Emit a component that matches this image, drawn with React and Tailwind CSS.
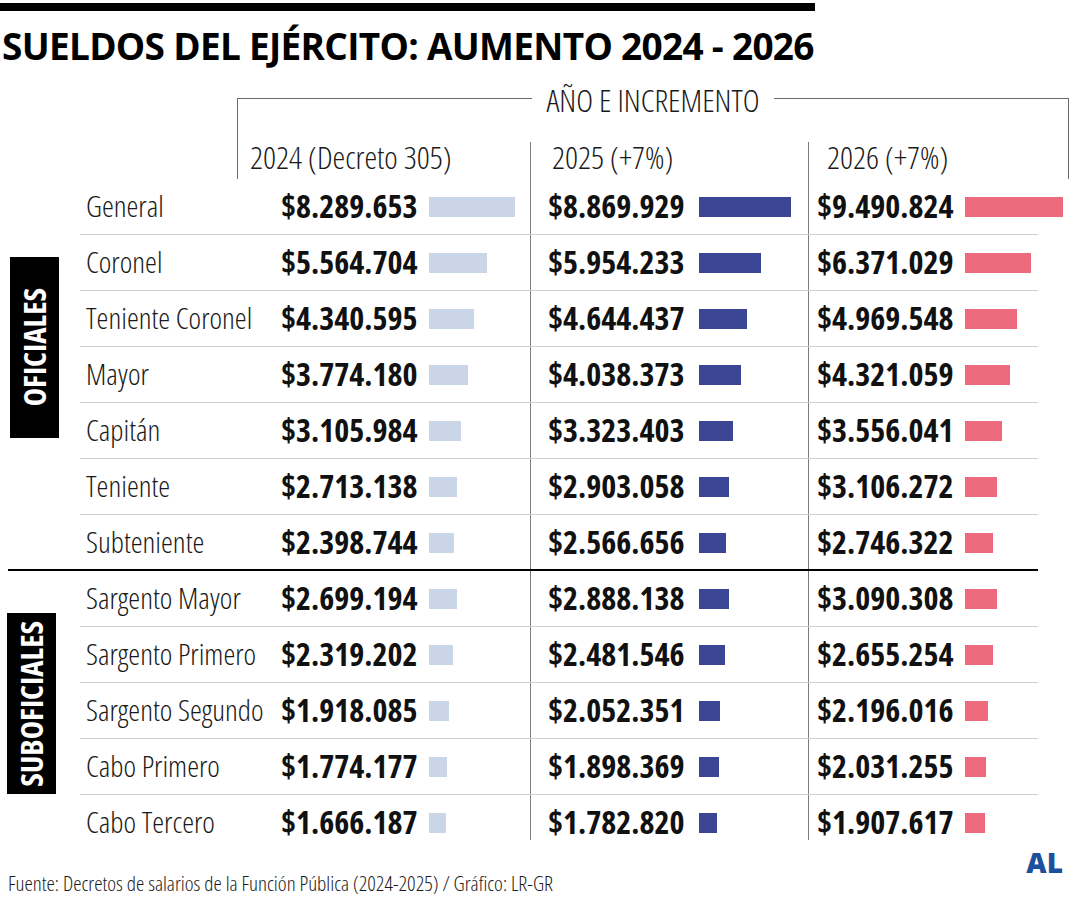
import React from 'react';

// Open Sans is variable on width, so 75% gives the condensed cut of the chart
const COND = "[font-family:'Open_Sans',sans-serif] [font-stretch:75%]";

const OFICIALES = [
  { rank: 'General', v: ['8.289.653', '8.869.929', '9.490.824'] },
  { rank: 'Coronel', v: ['5.564.704', '5.954.233', '6.371.029'] },
  { rank: 'Teniente Coronel', v: ['4.340.595', '4.644.437', '4.969.548'] },
  { rank: 'Mayor', v: ['3.774.180', '4.038.373', '4.321.059'] },
  { rank: 'Capitán', v: ['3.105.984', '3.323.403', '3.556.041'] },
  { rank: 'Teniente', v: ['2.713.138', '2.903.058', '3.106.272'] },
  { rank: 'Subteniente', v: ['2.398.744', '2.566.656', '2.746.322'] },
];

const SUBOFICIALES = [
  { rank: 'Sargento Mayor', v: ['2.699.194', '2.888.138', '3.090.308'] },
  { rank: 'Sargento Primero', v: ['2.319.202', '2.481.546', '2.655.254'] },
  { rank: 'Sargento Segundo', v: ['1.918.085', '2.052.351', '2.196.016'] },
  { rank: 'Cabo Primero', v: ['1.774.177', '1.898.369', '2.031.255'] },
  { rank: 'Cabo Tercero', v: ['1.666.187', '1.782.820', '1.907.617'] },
];

// px per peso, General 2024 = 86px
const SCALE = 86 / 8289653;

function barWidth(str) {
  return Math.round(Number(str.replace(/\./g, '')) * SCALE);
}

function Cell({ value, color, valueW, className }) {
  return (
    <div className={`pt-[10px] ${className}`}>
      <div className="flex h-[34px] items-center">
        <span className={`${valueW} shrink-0 text-[32px] leading-[34px] font-bold text-[#111]`}>
          ${value}
        </span>
        <div className={`mt-[2px] h-[20px] shrink-0 ${color}`} style={{ width: barWidth(value) }} />
      </div>
    </div>
  );
}

function Row({ item, border, height }) {
  return (
    <div className={`flex ${height} ${border ? 'border-b border-[#cfcfcf]' : ''}`}>
      <div className="w-[201px] shrink-0 pl-[6px] pt-[10px]">
        <div className="h-[34px] flex items-center text-[30px] leading-[34px] font-light text-[#1a1a1a] whitespace-nowrap">
          {item.rank}
        </div>
      </div>
      <Cell value={item.v[0]} color="bg-[#cad5e8]" valueW="w-[148px]" className="w-[249px] shrink-0" />
      <Cell value={item.v[1]} color="bg-[#3b4695]" valueW="w-[151px]" className="w-[278px] shrink-0 border-l border-[#7a7a7a] pl-[17px]" />
      <Cell value={item.v[2]} color="bg-[#ec6a7c]" valueW="w-[148px]" className="w-[230px] shrink-0 border-l border-[#7a7a7a] pl-[8px]" />
    </div>
  );
}

function Group({ label, items, boxClass, lastHeight }) {
  return (
    <div className="flex">
      <div className="w-[80px] shrink-0">
        <div className={`w-[49px] bg-black flex items-center justify-center ${boxClass}`}>
          <span className="[writing-mode:vertical-rl] rotate-180 text-white font-bold text-[31px] leading-none">
            {label}
          </span>
        </div>
      </div>
      <div className="w-[958px]">
        {items.map((item, i) => {
          const isLast = i === items.length - 1;
          return (
            <Row
              key={item.rank}
              item={item}
              border={!isLast}
              height={isLast ? lastHeight : 'h-[56px]'}
            />
          );
        })}
      </div>
    </div>
  );
}

export default function App() {
  return (
    <div className={`w-[1080px] h-[900px] bg-white overflow-hidden ${COND}`}>
      {/* top rule + headline */}
      <div className="pt-[3px]">
        <div className="w-[815px] h-[8px] bg-black" />
      </div>
      <h1 className="mt-[15px] pl-[2px] text-[37px] leading-[40px] font-bold text-black whitespace-nowrap tracking-[-0.7px] [font-stretch:100%]">
        SUELDOS DEL EJÉRCITO: AUMENTO 2024 - 2026
      </h1>

      {/* bracket with year headers */}
      <div className="mt-[32px] ml-[237px] w-[832px] h-[81px] border-t border-l border-r border-[#6b6b6b] flex flex-col">
        <div className="-mt-[16px] flex justify-center">
          <span className="bg-white px-[14px] text-[32px] leading-[34px] font-light text-[#1a1a1a]">
            AÑO E INCREMENTO
          </span>
        </div>
        <div className="mt-auto flex h-[37px] text-[32px] leading-[30px] font-light text-[#1a1a1a]">
          <div className="w-[292px] shrink-0 pl-[12px]">2024 (Decreto 305)</div>
          <div className="w-[278px] shrink-0 border-l border-[#7a7a7a] pl-[21px]">2025 (+7%)</div>
          <div className="w-[230px] shrink-0 border-l border-[#7a7a7a] pl-[18px]">2026 (+7%)</div>
        </div>
      </div>

      <Group label="OFICIALES" items={OFICIALES} boxClass="ml-[10px] mt-[78px] h-[181px]" lastHeight="h-[54px]" />
      <div className="ml-[8px] w-[1030px] h-[2px] bg-black" />
      <Group label="SUBOFICIALES" items={SUBOFICIALES} boxClass="ml-[7px] mt-[42px] h-[181px]" lastHeight="h-[45px]" />

      {/* source + logo */}
      <div className="flex justify-between items-start">
        <p className="mt-[32px] pl-[8px] text-[21px] leading-[22px] font-light text-[#1a1a1a]">
          Fuente: Decretos de salarios de la Función Pública (2024-2025) / Gráfico: LR-GR
        </p>
        <span className="mt-[8px] mr-[17px] text-[28px] leading-[28px] font-extrabold text-[#1d4f9c] [font-stretch:100%]">
          AL
        </span>
      </div>
    </div>
  );
}
